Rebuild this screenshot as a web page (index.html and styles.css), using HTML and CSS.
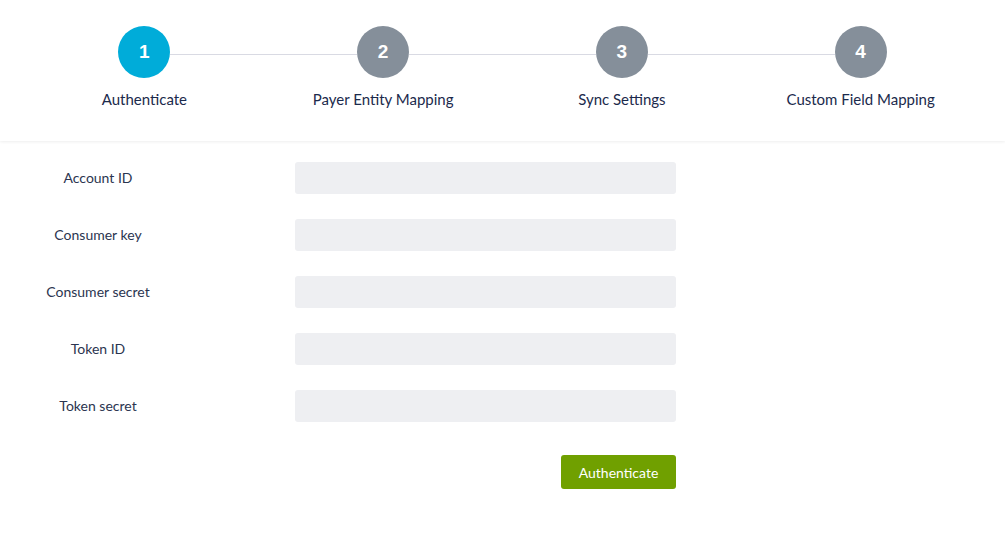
FILE: index.html
```html
<!DOCTYPE html>
<html lang="en">
<head>
<meta charset="utf-8">
<title>Authenticate</title>
<link rel="stylesheet" href="styles.css">
</head>
<body>
<header class="stepper-bar">
  <ol class="stepper">
    <li class="step step-active step-first">
      <div class="step-track"><span class="track track-left"></span><span class="circle">1</span><span class="track track-right"></span></div>
      <span class="step-label">Authenticate</span>
    </li>
    <li class="step">
      <div class="step-track"><span class="track track-left"></span><span class="circle">2</span><span class="track track-right"></span></div>
      <span class="step-label">Payer Entity Mapping</span>
    </li>
    <li class="step">
      <div class="step-track"><span class="track track-left"></span><span class="circle">3</span><span class="track track-right"></span></div>
      <span class="step-label">Sync Settings</span>
    </li>
    <li class="step step-last">
      <div class="step-track"><span class="track track-left"></span><span class="circle">4</span><span class="track track-right"></span></div>
      <span class="step-label">Custom Field Mapping</span>
    </li>
  </ol>
</header>
<main class="auth-form">
  <div class="form-row">
    <label class="form-label" for="account">Account ID</label>
    <input class="form-input" id="account" type="text">
  </div>
  <div class="form-row">
    <label class="form-label" for="ckey">Consumer key</label>
    <input class="form-input" id="ckey" type="text">
  </div>
  <div class="form-row">
    <label class="form-label" for="csecret">Consumer secret</label>
    <input class="form-input" id="csecret" type="text">
  </div>
  <div class="form-row">
    <label class="form-label" for="tid">Token ID</label>
    <input class="form-input" id="tid" type="text">
  </div>
  <div class="form-row">
    <label class="form-label" for="tsecret">Token secret</label>
    <input class="form-input" id="tsecret" type="text">
  </div>
  <div class="form-actions">
    <button class="btn-primary" type="button">Authenticate</button>
  </div>
</main>
</body>
</html>
```
FILE: styles.css
```css
* { box-sizing: border-box; }

html, body {
  margin: 0;
  padding: 0;
  background: #ffffff;
  font-family: Lato, "Open Sans", "Liberation Sans", sans-serif;
  color: #1e2d4f;
}

.stepper-bar {
  height: 141px;
  background: #ffffff;
  box-shadow: 0 1px 3px rgba(0, 0, 0, 0.07);
  padding: 26px 25px 0 25px;
}

.stepper {
  list-style: none;
  margin: 0;
  padding: 0;
  display: grid;
  grid-template-columns: repeat(4, 1fr);
}

.step {
  display: flex;
  flex-direction: column;
  align-items: center;
}

.step-track {
  display: flex;
  align-items: flex-start;
  width: 100%;
}

.track {
  flex: 1;
  height: 1px;
  margin-top: 28px;
  background: #d9dae3;
}

.step-first .track-left,
.step-last .track-right {
  background: transparent;
}

.circle {
  width: 52px;
  height: 52px;
  border-radius: 50%;
  background: #858f9a;
  color: #ffffff;
  display: flex;
  align-items: center;
  justify-content: center;
  font-family: "Liberation Sans", Arial, sans-serif;
  font-weight: bold;
  font-size: 19px;
  flex: none;
}

.step-active .circle {
  background: #00acd9;
}

.step-label {
  margin-top: 12px;
  font-size: 15px;
  line-height: 18px;
  color: #1b2a4c;
  white-space: nowrap;
}

.auth-form {
  padding-top: 21px;
}

.form-row {
  display: flex;
  align-items: center;
  margin-bottom: 25px;
}

.form-label {
  width: 196px;
  text-align: center;
  font-size: 14px;
  line-height: 18px;
  padding-bottom: 1px;
  color: #2b3550;
  margin-right: 99px;
}

.form-input {
  width: 381px;
  height: 32px;
  border: none;
  border-radius: 3px;
  background: #eeeff2;
  padding: 0 10px;
  font-family: inherit;
  font-size: 14px;
  outline: none;
}

.form-actions {
  display: flex;
  justify-content: flex-end;
  width: 676px;
  padding-top: 8px;
}

.btn-primary {
  width: 115px;
  height: 34px;
  border: none;
  border-radius: 3px;
  background: #70a000;
  color: #ffffff;
  font-family: inherit;
  font-size: 14px;
  cursor: pointer;
}
```
